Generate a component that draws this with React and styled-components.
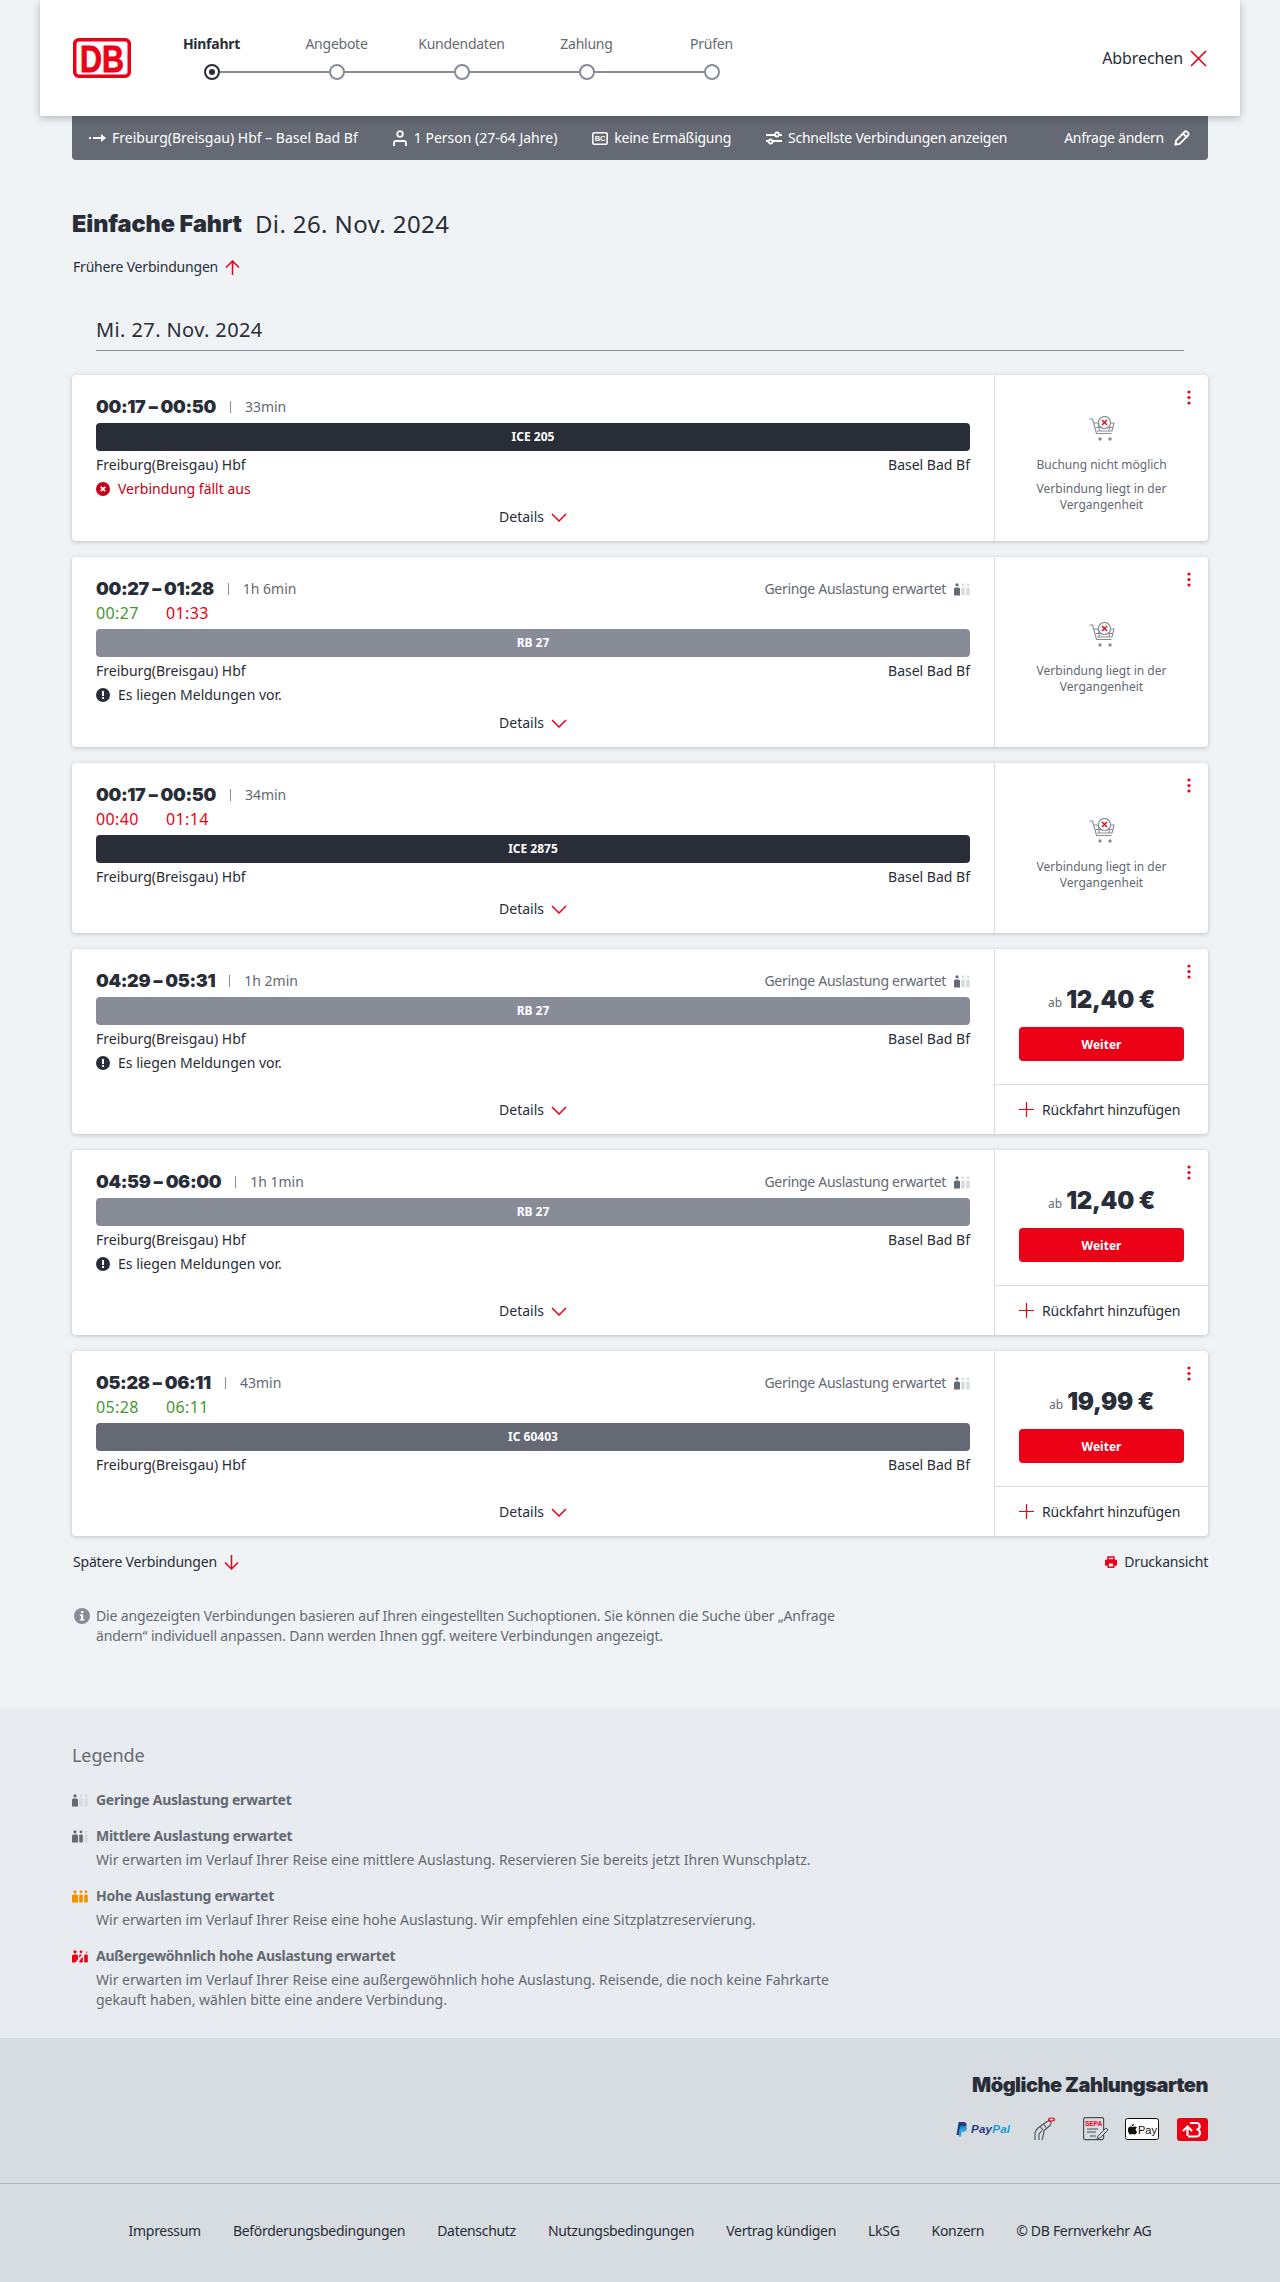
import React from "react";
import styled, { createGlobalStyle } from "styled-components";

const RED = "#ec0016";
const INK = "#282d37";
const GREY = "#646973";
const SANS = `"Noto Sans", "Liberation Sans", sans-serif`;
const HEAD = `Inter, "Noto Sans", sans-serif`;

const GlobalStyle = createGlobalStyle`
  * { box-sizing: border-box; }
  body {
    margin: 0;
    background: #f0f3f5;
    color: ${INK};
    font-family: ${SANS};
    font-size: 14px;
    line-height: 20px;
  }
`;

const Page = styled.div`
  width: 1280px;
  min-height: 2282px;
  display: flex;
  flex-direction: column;
`;

const Main = styled.main`
  height: 1709px;
  display: flex;
  flex-direction: column;
`;

const Header = styled.header`
  position: relative;
  z-index: 1;
  height: 116px;
  margin: 0 40px;
  padding: 0 33px;
  background: #fff;
  box-shadow: 0 2px 8px rgba(40, 45, 55, 0.3);
  display: flex;
  align-items: center;
`;

const Stepper = styled.ol`
  list-style: none;
  margin: 0 0 0 18px;
  padding: 0 0 2px;
  display: flex;
  letter-spacing: -0.25px;
`;

const Step = styled.li`
  position: relative;
  width: 125px;
  display: flex;
  flex-direction: column;
  align-items: center;
  gap: 10px;
  color: ${(p) => (p.$active ? INK : GREY)};
  font-weight: ${(p) => (p.$active ? 700 : 400)};

  &:not(:last-child)::after {
    content: "";
    position: absolute;
    left: 50%;
    width: 100%;
    top: 37px;
    height: 2px;
    background: #878c96;
  }
`;

const StepDot = styled.span`
  position: relative;
  z-index: 1;
  width: 16px;
  height: 16px;
  border-radius: 50%;
  background: #fff;
  border: 2px solid ${(p) => (p.$active ? INK : "#878c96")};
  display: flex;
  align-items: center;
  justify-content: center;

  &::before {
    content: "";
    width: 6px;
    height: 6px;
    border-radius: 50%;
    background: ${(p) => (p.$active ? INK : "transparent")};
  }
`;

const Cancel = styled.div`
  margin-left: auto;
  display: flex;
  align-items: center;
  gap: 7px;
  font-size: 16px;
  letter-spacing: -0.1px;
`;

const SubBar = styled.div`
  height: 44px;
  margin: 0 72px;
  padding: 0 18px 0 17px;
  background: ${GREY};
  color: #fff;
  border-radius: 0 0 4px 4px;
  display: flex;
  align-items: center;
  gap: 35px;
`;

const SubItem = styled.div`
  display: flex;
  align-items: center;
  gap: ${(p) => (p.$right ? 10 : 6)}px;
  margin-left: ${(p) => (p.$right ? "auto" : 0)};
  letter-spacing: ${(p) => (p.$tight ? "-0.25px" : "0")};
`;

const Content = styled.div`
  margin: 0 72px;
  display: flex;
  flex-direction: column;
`;

const Title = styled.h1`
  margin: 48px 0 0;
  font-size: 24px;
  line-height: 32px;
  font-weight: 400;
  letter-spacing: 0.4px;
  display: flex;
  gap: 13px;

  strong {
    font-family: ${HEAD};
    font-weight: 900;
    font-size: 23.5px;
    letter-spacing: -0.1px;
  }
`;

const LinkRow = styled.div`
  margin-top: ${(p) => p.$top}px;
  height: 24px;
  display: flex;
  align-items: center;
  justify-content: space-between;
  padding-left: 1px;
  letter-spacing: -0.2px;
`;

const IconLink = styled.span`
  display: flex;
  align-items: center;
  gap: 7px;
`;

const DateHeading = styled.h2`
  margin: 37px 24px 0;
  padding-bottom: 6px;
  font-size: 20px;
  line-height: 28px;
  font-weight: 400;
  letter-spacing: 0.4px;
  border-bottom: 1px solid #878c96;
`;

const CardList = styled.div`
  margin-top: 24px;
  display: flex;
  flex-direction: column;
  gap: 16px;
`;

const Card = styled.article`
  position: relative;
  min-height: ${(p) => p.$height}px;
  background: #fff;
  border-radius: 4px;
  box-shadow: 0 1px 4px rgba(40, 45, 55, 0.25);
  display: flex;
`;

const CardMain = styled.div`
  flex: 1;
  padding: 20px 24px 0;
  display: flex;
  flex-direction: column;
`;

const TimeRow = styled.div`
  height: 24px;
  display: flex;
  align-items: center;
`;

const Times = styled.span`
  font-family: ${HEAD};
  font-weight: 900;
  font-size: 18px;
  letter-spacing: -0.35px;
`;

const Pipe = styled.span`
  margin: 0 14px;
  width: 1px;
  height: 12px;
  background: #878c96;
`;

const Duration = styled.span`
  color: ${GREY};
`;

const Occupancy = styled.span`
  margin-left: auto;
  display: flex;
  align-items: center;
  gap: 8px;
  color: ${GREY};
  letter-spacing: -0.3px;
`;

const DelayRow = styled.div`
  height: 24px;
  display: flex;
  align-items: center;
  font-size: 16px;
  letter-spacing: 0.4px;
`;

const DelayTime = styled.span`
  width: 70px;
  color: ${(p) => (p.$late ? RED : "#3f9a2e")};
`;

const TrainBar = styled.div`
  margin-top: 4px;
  height: 28px;
  border-radius: 4px;
  background: ${(p) => p.$color};
  color: #fff;
  font-size: 12px;
  font-weight: 700;
  display: flex;
  align-items: center;
  justify-content: center;
`;

const Stations = styled.div`
  margin-top: 2px;
  height: 24px;
  display: flex;
  align-items: center;
  justify-content: space-between;
`;

const Message = styled.div`
  margin-top: 2px;
  height: 20px;
  display: flex;
  align-items: center;
  gap: 8px;
  color: ${(p) => (p.$alert ? "#c50014" : INK)};
`;

const DetailsRow = styled.div`
  margin-top: auto;
  margin-bottom: 6px;
  height: 36px;
  display: flex;
  align-items: center;
  justify-content: center;
  gap: 7px;
`;

const CardSide = styled.div`
  width: 214px;
  border-left: 1px solid #d7dce1;
  display: flex;
  flex-direction: column;
`;

const PastPanel = styled.div`
  flex: 1;
  padding: 13px 24px 0;
  display: flex;
  flex-direction: column;
  align-items: center;
  justify-content: center;
  text-align: center;
  color: ${GREY};
  font-size: 12px;
  line-height: 16px;
`;

const PastIcon = styled.span`
  display: flex;
  margin-bottom: 15px;
`;

const PastNote = styled.p`
  margin: 0 0 8px;
  &:last-child {
    margin-bottom: 0;
  }
`;

const PricePanel = styled.div`
  height: 136px;
  padding: 33px 24px 0;
  border-bottom: 1px solid #d7dce1;
`;

const Price = styled.div`
  height: 36px;
  display: flex;
  align-items: center;
  justify-content: center;
  gap: 4px;

  small {
    font-size: 12px;
    color: ${GREY};
    padding-top: 6px;
  }
  strong {
    font-family: ${HEAD};
    font-weight: 900;
    font-size: 24px;
    letter-spacing: -0.3px;
  }
`;

const NextButton = styled.button`
  width: 100%;
  height: 34px;
  margin-top: 9px;
  border: 0;
  border-radius: 4px;
  background: ${RED};
  color: #fff;
  font-family: ${SANS};
  font-size: 12px;
  font-weight: 700;
`;

const ReturnRow = styled.div`
  flex: 1;
  padding-left: 24px;
  display: flex;
  align-items: center;
  gap: 8px;
  letter-spacing: -0.2px;
`;

const Kebab = styled.span`
  position: absolute;
  top: 15px;
  right: 17px;
  display: flex;
`;

const Hint = styled.div`
  margin-top: 32px;
  display: flex;
  gap: 6px;
  padding-left: 2px;
  color: ${GREY};
  letter-spacing: -0.15px;

  svg {
    flex: none;
    margin-top: 2px;
  }
  p {
    margin: 0;
    width: 745px;
  }
`;

const Legend = styled.section`
  height: 329px;
  padding: 32px 72px 0;
  background: #e8ebf0;
  color: ${GREY};
`;

const LegendTitle = styled.h3`
  margin: 0 0 21px;
  font-size: 18px;
  line-height: 28px;
  font-weight: 400;
  letter-spacing: -0.1px;
`;

const LegendEntry = styled.div`
  margin-bottom: 16px;
  display: grid;
  grid-template-columns: 24px 760px;
  align-items: center;
  row-gap: 4px;

  strong {
    font-weight: 700;
    letter-spacing: -0.27px;
  }
  p {
    grid-column: 2;
    margin: 0;
  }
`;

const Payment = styled.section`
  height: 146px;
  padding: 33px 72px 0;
  background: #d7dce1;
  border-bottom: 1px solid #afb4bb;
  display: flex;
  flex-direction: column;
  align-items: flex-end;
`;

const PaymentTitle = styled.h3`
  margin: 0;
  font-family: ${HEAD};
  font-size: 20px;
  line-height: 28px;
  font-weight: 900;
  letter-spacing: -0.5px;
`;

const PaymentIcons = styled.div`
  margin-top: 18px;
  height: 24px;
  display: flex;
  align-items: center;
  gap: 15px;
`;

const Footer = styled.footer`
  flex: 1;
  padding-top: 37px;
  background: #d7dce1;
  display: flex;
  justify-content: center;
  gap: 32px;
  letter-spacing: -0.3px;
`;

/* icons */
const Glyph = ({ size = 16, h, children, sw = 1.5, color = "currentColor" }) => (
  <svg width={size} height={h || size} viewBox={`0 0 ${size} ${h || size}`} fill="none" stroke={color} strokeWidth={sw}>
    {children}
  </svg>
);

const DbLogo = () => (
  <svg width="58" height="40" viewBox="0 0 58 40">
    <rect x="1.75" y="1.75" width="54.5" height="36.5" rx="4" fill="#fff" stroke={RED} strokeWidth="3.5" />
    <text x="29" y="33.5" textAnchor="middle" fontFamily="Liberation Sans" fontWeight="700" fontSize="36" textLength="44" lengthAdjust="spacingAndGlyphs" fill={RED} stroke={RED} strokeWidth="0.8">DB</text>
  </svg>
);

const CloseIcon = () => (
  <Glyph size={17} color={RED} sw={1.6}><path d="M1 1l15 15M16 1L1 16" /></Glyph>
);
const ArrowUp = () => (
  <Glyph size={15} color={RED}><path d="M7.5 15V1M1 7.5L7.5 1 14 7.5" /></Glyph>
);
const ArrowDown = () => (
  <Glyph size={15} color={RED}><path d="M7.5 0v14M1 7.5L7.5 14 14 7.5" /></Glyph>
);
const Chevron = () => (
  <Glyph size={16} h={9} color={RED}><path d="M1 1l7 7 7-7" /></Glyph>
);
const PlusIcon = () => (
  <Glyph size={15} color={RED} sw={1.2}><path d="M7.5 0v15M0 7.5h15" /></Glyph>
);
const RouteIcon = () => (
  <svg width="17" height="10" viewBox="0 0 17 10" fill="#fff">
    <rect x="0" y="4" width="2" height="2" />
    <rect x="4" y="4" width="9" height="2" />
    <path d="M12 1l5 4-5 4z" />
  </svg>
);
const PersonIcon = () => (
  <Glyph size={15} h={16} sw={1.8}>
    <circle cx="7" cy="4" r="2.8" />
    <path d="M1 16v-3a2 2 0 012-2h8a2 2 0 012 2v3" />
  </Glyph>
);
const CardIcon = () => (
  <svg width="16" height="13" viewBox="0 0 16 13">
    <rect x="0.8" y="0.8" width="14.4" height="11.4" rx="1.5" fill="none" stroke="#fff" strokeWidth="1.6" />
    <text x="8" y="9.4" textAnchor="middle" fontSize="7.500" fontWeight="700" fontFamily="Liberation Sans" fill="#fff">BC</text>
  </svg>
);
const SlidersIcon = () => (
  <svg width="16" height="14" viewBox="0 0 16 14" fill="#fff" stroke="#fff" strokeWidth="1.8">
    <path d="M0 4h16M0 10h16" />
    <circle cx="11" cy="3.5" r="2" fill={GREY} />
    <circle cx="4.5" cy="10.5" r="2" fill={GREY} />
  </svg>
);
const PencilIcon = () => (
  <Glyph size={16} sw={1.9}>
    <path d="M1.5 14.5l.6-4L10.5 1.8a1.8 1.8 0 012.6 0l1 1a1.8 1.8 0 010 2.6L5.6 13.9zM9 3.5l3.5 3.5" />
  </Glyph>
);
const CancelIcon = () => (
  <svg width="14" height="14" viewBox="0 0 14 14">
    <circle cx="7" cy="7" r="7" fill="#c50014" />
    <path d="M4.8 4.8l4.4 4.4M9.2 4.8L4.8 9.2" stroke="#fff" strokeWidth="1.8" />
  </svg>
);
const NoticeIcon = () => (
  <svg width="14" height="14" viewBox="0 0 14 14">
    <circle cx="7" cy="7" r="7" fill={INK} />
    <rect x="6" y="3" width="2" height="5" fill="#fff" />
    <rect x="6" y="9" width="2" height="2" fill="#fff" />
  </svg>
);
const InfoIcon = () => (
  <svg width="16" height="16" viewBox="0 0 16 16">
    <circle cx="8" cy="8" r="8" fill="#878c96" />
    <rect x="7" y="3" width="2.4" height="2.2" fill="#fff" />
    <path d="M5.8 6.6h3.4v4.6h1.2v1.4H5.8v-1.4h1.2V8H5.8z" fill="#fff" />
  </svg>
);
const PrintIcon = () => (
  <svg width="12" height="12" viewBox="0 0 12 12" fill="none" stroke={RED} strokeWidth="1.5">
    <path d="M3 1h6v3H3z" />
    <path d="M2.5 9H.8V4.5h10.4V9H9.5" fill={RED} />
    <rect x="3.2" y="6.8" width="5.6" height="4.4" fill="#f0f3f5" />
  </svg>
);
const KebabIcon = () => (
  <svg width="4" height="15" viewBox="0 0 4 15" fill={RED}>
    <circle cx="2" cy="2" r="1.6" />
    <circle cx="2" cy="7.5" r="1.6" />
    <circle cx="2" cy="13" r="1.6" />
  </svg>
);
const CartIcon = () => (
  <svg width="26" height="26" viewBox="0 0 26 26" fill="none" stroke="#878c96" strokeWidth="1.1">
    <path d="M0.5 3h3l4 14.5h15" />
    <path d="M5 7h4M18 7h7l-2 8H8" />
    <path d="M6.5 11.5h17M9 7l1.5 8M21 7l-1 8" />
    <circle cx="11" cy="23" r="1.7" fill="#878c96" stroke="none" />
    <circle cx="21" cy="23" r="1.7" fill="#878c96" stroke="none" />
    <circle cx="15.5" cy="6.5" r="6" fill="#fff" />
    <path d="M13 4l5 5M18 4l-5 5" stroke={RED} strokeWidth="1.4" />
  </svg>
);

const LOAD_COLORS = {
  1: [GREY, "#d7dce1", "#d7dce1"],
  2: [GREY, GREY, "#d7dce1"],
  3: ["#f39200", "#f39200", "#f39200"],
  4: [RED, RED, RED],
};

const LoadIcon = ({ level }) => {
  const [a, b, c] = LOAD_COLORS[level];
  return (
    <svg width="16" height="13" viewBox="0 0 16 13">
      <circle cx="3" cy="1.8" r="1.6" fill={a} />
      <path d="M0 6a1.5 1.5 0 011.5-1.5h3A1.5 1.5 0 016 6v6.5H0z" fill={a} />
      <circle cx="9" cy="1.8" r="1.4" fill={b} />
      <rect x="7.2" y="4.5" width="3.6" height="8" rx="1" fill={b} />
      <circle cx="14" cy="1.8" r="1.4" fill={c} />
      <rect x="12.2" y="4.5" width="3.6" height="8" rx="1" fill={c} />
      {level === 4 && <path d="M3 14.500L15 0" stroke="#e8ebf0" strokeWidth="2" />}
    </svg>
  );
};

const PayPalLogo = () => (
  <svg width="56" height="16" viewBox="0 0 56 16">
    <path d="M1.5 14L3.6 1h5c2.6 0 3.4 2 2.8 3.8-.6 2-2.4 3-4.4 3H4.900L4 14z" fill="#253b80" />
    <path d="M3.6 15.500L5.200 5h4.400c2 0 2.800 1.500 2.300 3.200-.5 1.800-2 2.800-3.800 2.800H6.600L6 15.500z" fill="#179bd7" opacity="0.85" />
    <text x="16" y="12" fontFamily="Liberation Sans" fontSize="11.5" fontWeight="700" fontStyle="italic" textLength="39">
      <tspan fill="#253b80">Pay</tspan>
      <tspan fill="#179bd7">Pal</tspan>
    </text>
  </svg>
);
const CardHandIcon = () => (
  <svg width="33" height="24" viewBox="-8 0 33 24" fill="none" stroke="#4a4f59" strokeWidth="1.1">
    <path d="M1 23v-7c0-2 1-3 3-5l9-6.500c1.500-1 3.500-.5 4 1 .5 1.200 0 2-1 3l-6 5-.5 4-1.500 5.500" />
    <path d="M5 23v-6l3-3.500M6.500 10l2.500 3M10 7.500l2 3" />
    <ellipse cx="17.500" cy="2.500" rx="3" ry="1.500" stroke={RED} strokeWidth="1.200" />
  </svg>
);
const SepaIcon = () => (
  <svg width="36" height="24" viewBox="-9 0 36 24" fill="none">
    <rect x="0.6" y="0.6" width="20" height="22" rx="1.500" stroke="#4a4f59" strokeWidth="1.200" />
    <text x="10.500" y="9" textAnchor="middle" fontFamily="Liberation Sans" fontWeight="700" fontSize="6.500" fill={RED}>SEPA</text>
    <path d="M4 12h11M4 15h9M7 19h6" stroke="#4a4f59" />
    <path d="M15 19l8-8 2 2-8 8-3 1z" fill="#d7dce1" stroke="#4a4f59" />
  </svg>
);
const ApplePayMark = () => (
  <svg width="34" height="22" viewBox="0 0 34 22">
    <rect x="0.5" y="0.5" width="33" height="21" rx="2" fill="#fff" stroke="#111" />
    <path d="M10 8.500c-1-.1-2 .6-2.400.6-.5 0-1.200-.6-2-.6-1.100 0-2.700 1-2.700 3.400 0 2.300 1.600 4.600 2.700 4.600.7 0 1.200-.5 2-.5s1.200.5 2 .5c1 0 2-1.500 2.400-2.800-1.800-.8-1.800-3.500 0-4.400-.4-.5-1.200-.8-2-.8zM8 8c.6-.7 1-1.300 1-2.200-.8.1-1.900.8-2.100 2.200.4 0 .8.200 1.100 0z" fill="#111" />
    <text x="13" y="15.500" fontFamily="Liberation Sans" fontSize="11" fill="#111">Pay</text>
  </svg>
);
const BonusLogo = () => (
  <svg width="34" height="23" viewBox="-3 0 34 23">
    <rect width="31" height="23" rx="3" fill={RED} />
    <path d="M13 5h6.500a3.200 3.200 0 010 6.500 3.500 3.500 0 010 7H11" fill="none" stroke="#fff" strokeWidth="2.200" />
    <path d="M6 13l4.500-4.500L15 13M10.500 9v9" fill="none" stroke="#fff" strokeWidth="2.200" />
  </svg>
);

const STEPS = ["Hinfahrt", "Angebote", "Kundendaten", "Zahlung", "Prüfen"];
const FOOTER_LINKS = [
  "Impressum",
  "Beförderungsbedingungen",
  "Datenschutz",
  "Nutzungsbedingungen",
  "Vertrag kündigen",
  "LkSG",
  "Konzern",
  "© DB Fernverkehr AG",
];

const NOTICE = "Es liegen Meldungen vor.";
const LOW_LOAD = "Geringe Auslastung erwartet";

const connections = [
  { id: 1, height: 166, times: "00:17 – 00:50", duration: "33min", train: "ICE 205", color: INK, alert: "Verbindung fällt aus", past: true, blocked: true },
  { id: 2, height: 190, times: "00:27 – 01:28", duration: "1h 6min", load: true, delay: ["00:27", "01:33"], train: "RB 27", color: "#878c96", message: NOTICE, past: true },
  { id: 3, height: 170, times: "00:17 – 00:50", duration: "34min", delay: ["00:40", "01:14"], lateStart: true, train: "ICE 2875", color: INK, past: true },
  { id: 4, height: 185, times: "04:29 – 05:31", duration: "1h 2min", load: true, train: "RB 27", color: "#878c96", message: NOTICE, price: "12,40 €" },
  { id: 5, height: 185, times: "04:59 – 06:00", duration: "1h 1min", load: true, train: "RB 27", color: "#878c96", message: NOTICE, price: "12,40 €" },
  { id: 6, height: 185, times: "05:28 – 06:11", duration: "43min", load: true, delay: ["05:28", "06:11"], onTime: true, train: "IC 60403", color: GREY, price: "19,99 €" },
];

function Connection({ item }) {
  return (
    <Card $height={item.height}>
      <CardMain>
        <TimeRow>
          <Times>{item.times}</Times>
          <Pipe />
          <Duration>{item.duration}</Duration>
          {item.load && (
            <Occupancy>
              {LOW_LOAD} <LoadIcon level={1} />
            </Occupancy>
          )}
        </TimeRow>
        {item.delay && (
          <DelayRow>
            <DelayTime $late={item.lateStart}>{item.delay[0]}</DelayTime>
            <DelayTime $late={!item.onTime}>{item.delay[1]}</DelayTime>
          </DelayRow>
        )}
        <TrainBar $color={item.color}>{item.train}</TrainBar>
        <Stations>
          <span>Freiburg(Breisgau) Hbf</span>
          <span>Basel Bad Bf</span>
        </Stations>
        {item.alert && (
          <Message $alert>
            <CancelIcon /> {item.alert}
          </Message>
        )}
        {item.message && (
          <Message>
            <NoticeIcon /> {item.message}
          </Message>
        )}
        <DetailsRow>
          Details <Chevron />
        </DetailsRow>
      </CardMain>
      <CardSide>
        {item.past ? (
          <PastPanel>
            <PastIcon>
              <CartIcon />
            </PastIcon>
            {item.blocked && <PastNote>Buchung nicht möglich</PastNote>}
            <PastNote>Verbindung liegt in der Vergangenheit</PastNote>
          </PastPanel>
        ) : (
          <>
            <PricePanel>
              <Price>
                <small>ab</small>
                <strong>{item.price}</strong>
              </Price>
              <NextButton>Weiter</NextButton>
            </PricePanel>
            <ReturnRow>
              <PlusIcon /> Rückfahrt hinzufügen
            </ReturnRow>
          </>
        )}
      </CardSide>
      <Kebab>
        <KebabIcon />
      </Kebab>
    </Card>
  );
}

export default function App() {
  return (
    <Page>
      <GlobalStyle />
      <Main>
        <Header>
          <DbLogo />
          <Stepper>
            {STEPS.map((step, i) => (
              <Step key={step} $active={i === 0}>
                {step}
                <StepDot $active={i === 0} />
              </Step>
            ))}
          </Stepper>
          <Cancel>
            Abbrechen <CloseIcon />
          </Cancel>
        </Header>
        <SubBar>
          <SubItem><RouteIcon /> Freiburg(Breisgau) Hbf – Basel Bad Bf</SubItem>
          <SubItem><PersonIcon /> 1 Person (27-64 Jahre)</SubItem>
          <SubItem $tight><CardIcon /> keine Ermäßigung</SubItem>
          <SubItem $tight><SlidersIcon /> Schnellste Verbindungen anzeigen</SubItem>
          <SubItem $right $tight>Anfrage ändern <PencilIcon /></SubItem>
        </SubBar>
        <Content>
          <Title>
            <strong>Einfache Fahrt</strong> Di. 26. Nov. 2024
          </Title>
          <LinkRow $top={15}>
            <IconLink>Frühere Verbindungen <ArrowUp /></IconLink>
          </LinkRow>
          <DateHeading>Mi. 27. Nov. 2024</DateHeading>
          <CardList>
            {connections.map((item) => (
              <Connection key={item.id} item={item} />
            ))}
          </CardList>
          <LinkRow $top={14}>
            <IconLink>Spätere Verbindungen <ArrowDown /></IconLink>
            <IconLink><PrintIcon /> Druckansicht</IconLink>
          </LinkRow>
          <Hint>
            <InfoIcon />
            <p>
              Die angezeigten Verbindungen basieren auf Ihren eingestellten Suchoptionen. Sie können die Suche über „Anfrage
              ändern“ individuell anpassen. Dann werden Ihnen ggf. weitere Verbindungen angezeigt.
            </p>
          </Hint>
        </Content>
      </Main>
      <Legend>
        <LegendTitle>Legende</LegendTitle>
        <LegendEntry>
          <LoadIcon level={1} />
          <strong>Geringe Auslastung erwartet</strong>
        </LegendEntry>
        <LegendEntry>
          <LoadIcon level={2} />
          <strong>Mittlere Auslastung erwartet</strong>
          <p>Wir erwarten im Verlauf Ihrer Reise eine mittlere Auslastung. Reservieren Sie bereits jetzt Ihren Wunschplatz.</p>
        </LegendEntry>
        <LegendEntry>
          <LoadIcon level={3} />
          <strong>Hohe Auslastung erwartet</strong>
          <p>Wir erwarten im Verlauf Ihrer Reise eine hohe Auslastung. Wir empfehlen eine Sitzplatzreservierung.</p>
        </LegendEntry>
        <LegendEntry>
          <LoadIcon level={4} />
          <strong>Außergewöhnlich hohe Auslastung erwartet</strong>
          <p>
            Wir erwarten im Verlauf Ihrer Reise eine außergewöhnlich hohe Auslastung. Reisende, die noch keine Fahrkarte
            gekauft haben, wählen bitte eine andere Verbindung.
          </p>
        </LegendEntry>
      </Legend>
      <Payment>
        <PaymentTitle>Mögliche Zahlungsarten</PaymentTitle>
        <PaymentIcons>
          <PayPalLogo />
          <CardHandIcon />
          <SepaIcon />
          <ApplePayMark />
          <BonusLogo />
        </PaymentIcons>
      </Payment>
      <Footer>
        {FOOTER_LINKS.map((link) => (
          <span key={link}>{link}</span>
        ))}
      </Footer>
    </Page>
  );
}
